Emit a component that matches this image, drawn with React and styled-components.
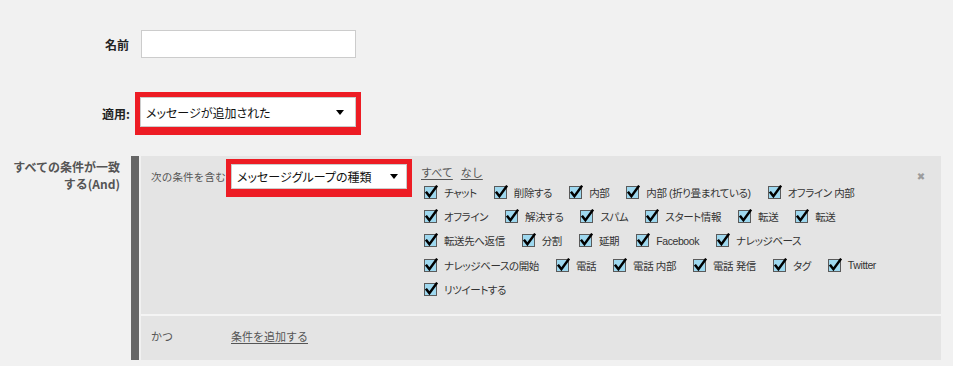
import React from "react";
import styled, { createGlobalStyle } from "styled-components";

const GlobalStyle = createGlobalStyle`
  html, body {
    margin: 0;
    padding: 0;
    background: #f1f1f1;
  }
  body {
    font-family: "Liberation Sans", "Noto Sans CJK JP", sans-serif;
    color: #333;
  }
`;

const Page = styled.div`
  width: 953px;
  height: 366px;
  box-sizing: border-box;
  padding-top: 30px;
  display: flex;
  flex-direction: column;
`;

const FormRow = styled.div`
  display: flex;
  align-items: ${(p) => (p.$top ? "flex-start" : "center")};
  margin-bottom: ${(p) => p.$mb || 0}px;
`;

const Label = styled.div`
  flex: 0 0 131px;
  box-sizing: border-box;
  text-align: right;
  padding-right: ${(p) => p.$pr || 2}px;
  padding-top: ${(p) => p.$pt || 0}px;
  font-family: "Noto Sans CJK JP", sans-serif;
  font-size: 12px;
  line-height: 17px;
  font-weight: bold;
  color: ${(p) => p.$color || "#222"};
`;

const TextInput = styled.div`
  margin-left: 10px;
  width: 215px;
  height: 28px;
  box-sizing: border-box;
  background: #fff;
  border: 1px solid #cccccc;
`;

const RedFrame = styled.div`
  margin-left: ${(p) => p.$ml || 0}px;
  border: 5px solid #ed1c24;
  border-bottom-width: 8px;
  flex: 0 0 auto;
`;

const Select = styled.div`
  width: ${(p) => p.$w}px;
  height: ${(p) => p.$h}px;
  box-sizing: border-box;
  background: #fff;
  border: 1px solid #cccccc;
  display: flex;
  align-items: center;
  padding-left: 5px;
  padding-right: ${(p) => p.$arrowRight}px;
  font-family: "Noto Sans CJK JP", sans-serif;
  font-size: ${(p) => p.$fs}px;
  font-feature-settings: "palt" 1;
  color: #111;
  white-space: nowrap;
`;

const SelectText = styled.span`
  flex: 1;
`;

const Arrow = styled.span`
  width: 0;
  height: 0;
  border-left: 4px solid transparent;
  border-right: 4px solid transparent;
  border-top: 5px solid #000;
`;

const Section = styled.div`
  flex: 1;
  display: flex;
  height: 204px;
  gap: 2px;
  margin-right: 12px;
`;

const Bar = styled.div`
  flex: 0 0 8px;
  background: #666666;
`;

const Panel = styled.div`
  flex: 1;
  display: flex;
  flex-direction: column;
  gap: 2px;
  background: #f4f4f4;
`;

const TopPart = styled.div`
  height: 158px;
  box-sizing: border-box;
  background: #e4e4e4;
  display: flex;
  align-items: flex-start;
  padding: 3px 15px 0 10px;
`;

const SmallText = styled.div`
  font-family: "Noto Sans CJK JP", sans-serif;
  font-size: 10.5px;
  color: #555;
  white-space: nowrap;
`;

const ConditionLabel = styled(SmallText)`
  flex: 0 0 75px;
  line-height: 36px;
  letter-spacing: 0.2px;
`;

const Options = styled.div`
  flex: 0 0 auto;
  margin-left: 9px;
  margin-top: 5px;
  display: flex;
  flex-direction: column;
`;

const Links = styled.div`
  display: flex;
  gap: 8px;
  height: 16px;
  align-items: center;
`;

const TextLink = styled.a`
  font-family: "Noto Sans CJK JP", sans-serif;
  font-size: 11px;
  color: #555;
  text-decoration: underline;
  text-underline-offset: 2px;
  cursor: pointer;
`;

const OptionRow = styled.div`
  display: flex;
  align-items: center;
  height: 24.4px;
  padding-left: 3px;
  gap: 17px;
`;

const Option = styled.label`
  display: flex;
  align-items: center;
  gap: 6px;
  font-family: "Liberation Sans", "Noto Sans CJK JP", sans-serif;
  font-size: 10.5px;
  letter-spacing: -0.4px;
  font-feature-settings: "palt" 1;
  color: #333;
  white-space: nowrap;
`;

const Close = styled.span`
  margin-left: auto;
  margin-top: 12px;
  width: 10px;
  text-align: center;
  font-family: "DejaVu Sans", sans-serif;
  font-size: 10px;
  color: #9c9c9c;
  line-height: 11px;
`;

const BottomPart = styled.div`
  flex: 1;
  background: #e4e4e4;
  display: flex;
  align-items: center;
  padding: 0 0 4px 10px;
`;

const AndLabel = styled(SmallText)`
  flex: 0 0 80px;
  font-size: 11px;
`;

const Check = () => (
  <svg width="14" height="15" viewBox="0 0 14 15">
    <rect x="0.5" y="1.5" width="12" height="12" fill="#9ed8ef" stroke="#5a5a5a" />
    <path d="M2.6 7.6 L5.4 11.2 L12.4 1.6" fill="none" stroke="#000" strokeWidth="2.4" strokeLinecap="square" />
  </svg>
);

const rows = [
  ["チャット", "削除する", "内部", "内部 (折り畳まれている)", "オフライン 内部"],
  ["オフライン", "解決する", "スパム", "スタート情報", "転送", "転送"],
  ["転送先へ返信", "分割", "延期", "Facebook", "ナレッジベース"],
  ["ナレッジベースの開始", "電話", "電話 内部", "電話 発信", "タグ", "Twitter"],
  ["リツイートする"],
];

export default function App() {
  return (
    <>
      <GlobalStyle />
      <Page>
        <FormRow $mb={34}>
          <Label>名前</Label>
          <TextInput />
        </FormRow>
        <FormRow $mb={21}>
          <Label $pr={1}>適用:</Label>
          <RedFrame $ml={4}>
            <Select $w={216} $h={30} $fs={12} $arrowRight={11}>
              <SelectText>メッセージが追加された</SelectText>
              <Arrow />
            </Select>
          </RedFrame>
        </FormRow>
        <FormRow $top>
          <Label $pr={11} $pt={2} $color="#555">
            すべての条件が一致
            <br />
            する(And)
          </Label>
          <Section>
            <Bar />
            <Panel>
              <TopPart>
                <ConditionLabel>次の条件を含む</ConditionLabel>
                <RedFrame>
                  <Select $w={176} $h={25} $fs={12} $arrowRight={8}>
                    <SelectText>メッセージグループの種類</SelectText>
                    <Arrow />
                  </Select>
                </RedFrame>
                <Options>
                  <Links>
                    <TextLink>すべて</TextLink>
                    <TextLink>なし</TextLink>
                  </Links>
                  {rows.map((row, i) => (
                    <OptionRow key={i}>
                      {row.map((item, j) => (
                        <Option key={j}>
                          <Check />
                          {item}
                        </Option>
                      ))}
                    </OptionRow>
                  ))}
                </Options>
                <Close>✖</Close>
              </TopPart>
              <BottomPart>
                <AndLabel>かつ</AndLabel>
                <TextLink>条件を追加する</TextLink>
              </BottomPart>
            </Panel>
          </Section>
        </FormRow>
      </Page>
    </>
  );
}
